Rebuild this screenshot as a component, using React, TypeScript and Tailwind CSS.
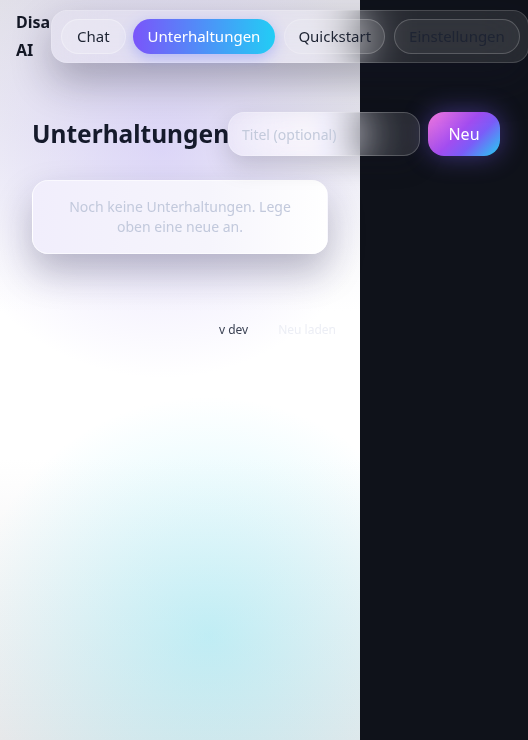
import React from "react";

export default function App() {
  return (
    <div className="min-h-[740px] w-full bg-[#0f121a] flex font-['Noto_Sans',sans-serif]">
      <div className="w-[360px] shrink-0 min-h-[740px] bg-[radial-gradient(circle_230px_at_45%_20%,rgba(200,188,250,0.5),transparent),radial-gradient(circle_240px_at_58%_86%,rgba(125,232,248,0.42),transparent),linear-gradient(180deg,#e2e1e8_0%,#f4f4f8_26%,#ffffff_42%,#ffffff_62%,#e8e8ea_100%)]">
        <header className="flex items-center pl-4 pt-2">
          <div className="w-[35px] shrink-0 text-[16px] font-bold leading-7 text-[#141826]">Disa AI</div>
          <nav className="shrink-0 flex items-center p-[8px] pl-[9px] rounded-2xl bg-white/10 backdrop-blur-xl border border-white/15 shadow-[0_18px_40px_rgba(20,20,40,0.3)]">
            <button className="h-[35px] px-[15px] rounded-full text-[15px] text-[#1e2433] bg-white/20 border border-white/30">Chat</button>
            <button className="ml-[7px] h-[35px] px-[15px] rounded-full text-[15px] text-white bg-[linear-gradient(90deg,#7a55fa,#22cdf5)] shadow-[0_4px_14px_rgba(90,110,250,0.35)]">Unterhaltungen</button>
            <button className="ml-[9px] h-[35px] px-[13px] rounded-full text-[15px] text-[#1e2433] bg-white/10 border border-white/20">Quickstart</button>
            <button className="ml-[9px] h-[35px] px-[14px] rounded-full text-[15px] text-[#1e2433] bg-white/5 border border-white/20">Einstellungen</button>
          </nav>
        </header>

        <main className="pl-8 pt-[48px]">
          <div className="flex items-center">
            <h1 className="w-[196px] shrink-0 text-[24.5px] font-bold text-[#151a2b] leading-8 whitespace-nowrap">Unterhaltungen</h1>
            <input
              placeholder="Titel (optional)"
              className="w-[192px] shrink-0 h-[44px] px-[13px] rounded-2xl text-[14px] bg-white/10 backdrop-blur-xl backdrop-brightness-110 border border-white/20 placeholder:text-[#c3cadb] text-[#1e2433] shadow-[0_10px_25px_rgba(20,20,40,0.18)] outline-none"
            />
            <button className="ml-2 shrink-0 w-[72px] h-[44px] rounded-2xl text-[16px] text-white bg-[linear-gradient(135deg,#f47ae0,#a24df0_45%,#7b5cf8_65%,#22d0f2)] shadow-[0_0_26px_rgba(120,90,250,0.45)]">Neu</button>
          </div>

          <div className="mt-6 w-[296px] rounded-2xl bg-[linear-gradient(90deg,#f1eefc,#f6f5fc_60%,#ffffff)] py-4 px-6 shadow-[0_18px_36px_rgba(30,30,60,0.28)] border border-white/60">
            <p className="text-center text-[14px] leading-5 text-[#c2c9dc]">Noch keine Unterhaltungen. Lege oben eine neue an.</p>
          </div>
        </main>

        <footer className="flex justify-end items-center gap-[30px] pr-6 mt-[67px] text-[12px]">
          <span className="text-[#3b4254]">v dev</span>
          <button className="text-[#eceef5]">Neu laden</button>
        </footer>
      </div>
    </div>
  );
}
